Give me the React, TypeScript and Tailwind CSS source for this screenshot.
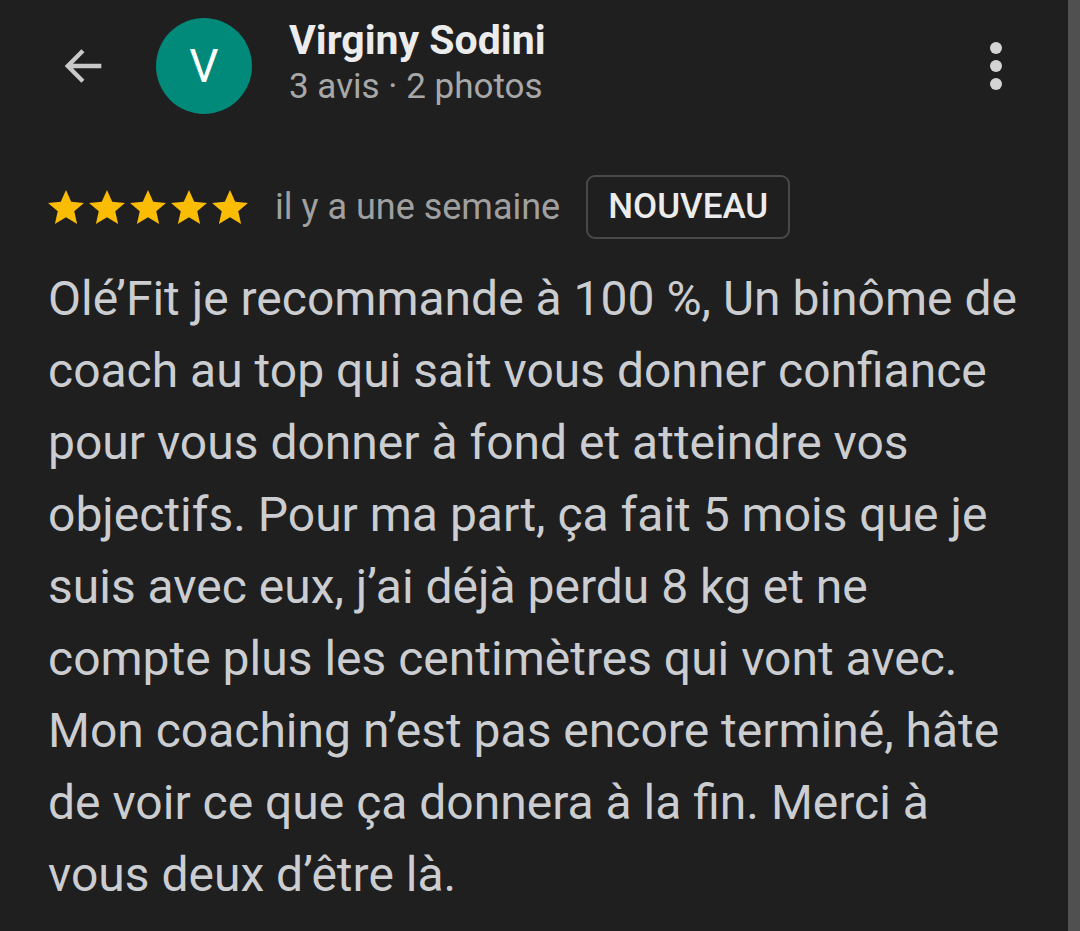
import React from 'react';

const Star = () => (
  <svg viewBox="2 2.5 20 19.5" className="w-[36px] h-[35px]" fill="#fbbc04">
    <path d="M12 2.5l2.9 6.6 7.1.6-5.4 4.7 1.6 7-6.2-3.7-6.2 3.7 1.6-7L2 9.7l7.1-.6z" />
  </svg>
);

const lines = [
  'Olé’Fit je recommande à 100 %, Un binôme de',
  'coach au top qui sait vous donner confiance',
  'pour vous donner à fond et atteindre vos',
  'objectifs. Pour ma part, ça fait 5 mois que je',
  'suis avec eux, j’ai déjà perdu 8 kg et ne',
  'compte plus les centimètres qui vont avec.',
  'Mon coaching n’est pas encore terminé, hâte',
  'de voir ce que ça donnera à la fin. Merci à',
  'vous deux d’être là.',
];

export default function App() {
  return (
    <div className="w-[1080px] h-[931px] bg-[#1f1f1f] flex overflow-hidden" style={{ fontFamily: 'Roboto, "Noto Sans", sans-serif' }}>
      <div className="flex-1 flex flex-col">
        {/* header */}
        <div className="flex items-start h-[130px] pt-[18px]">
          <button className="ml-[58px] mt-[22px] w-[52px] h-[52px] flex items-center justify-center text-[#c9c9c9]">
            <svg viewBox="0 0 24 24" className="w-[52px] h-[52px]" fill="none" stroke="currentColor" strokeWidth="2">
              <path d="M20 12H4.5M11.5 5l-7 7 7 7" />
            </svg>
          </button>
          <div className="ml-[46px] w-[96px] h-[96px] rounded-full bg-[#01897a] flex items-center justify-center text-white text-[46px] leading-none">
            V
          </div>
          <div className="ml-[37px] flex flex-col -mt-[2px]">
            <div className="text-[#ececec] text-[41px] font-bold leading-[48px]">Virginy Sodini</div>
            <div className="text-[#a8a8a8] text-[35px] leading-[46px]">3 avis · 2 photos</div>
          </div>
          <div className="ml-auto mr-[52px] mt-[24px] flex flex-col items-center gap-[6px] w-[40px]">
            <span className="w-[12px] h-[12px] rounded-full bg-[#d4d4d4]" />
            <span className="w-[12px] h-[12px] rounded-full bg-[#d4d4d4]" />
            <span className="w-[12px] h-[12px] rounded-full bg-[#d4d4d4]" />
          </div>
        </div>

        {/* rating row */}
        <div className="flex items-center mt-[45px] pl-[48px]">
          <div className="flex gap-[5px]">
            <Star />
            <Star />
            <Star />
            <Star />
            <Star />
          </div>
          <span className="ml-[27px] text-[#a0a0a0] text-[36px]">il y a une semaine</span>
          <span className="ml-[26px] h-[64px] px-[20px] flex items-center border-2 border-[#48494b] rounded-[9px] text-[#ececec] text-[35px] font-medium">
            NOUVEAU
          </span>
        </div>

        {/* review body */}
        <div className="mt-[24px] pl-[48px] text-[#cbcdd1] text-[48px] leading-[72px] whitespace-nowrap">
          {lines.map((l, i) => (
            <div key={i}>{l}</div>
          ))}
        </div>
      </div>
      <div className="w-[12px] h-full bg-[#505050]" />
    </div>
  );
}
